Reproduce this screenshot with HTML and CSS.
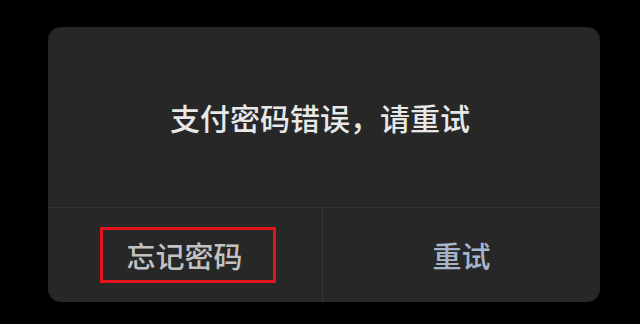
FILE: index.html
```html
<!DOCTYPE html>
<html lang="zh-CN">
<head>
<meta charset="utf-8">
<link rel="stylesheet" href="styles.css">
</head>
<body>
<div class="dialog">
  <div class="message">支付密码错误，请重试</div>
  <div class="actions">
    <div class="action left"><span class="label highlighted">忘记密码</span></div>
    <div class="action right"><span class="label retry">重试</span></div>
  </div>
</div>
</body>
</html>
```
FILE: styles.css
```css
html, body {
  margin: 0;
  padding: 0;
  background: #000;
  width: 640px;
  height: 324px;
  overflow: hidden;
  font-family: "Noto Sans CJK SC", "Noto Sans", sans-serif;
}
.dialog {
  margin: 27px 0 0 48px;
  width: 552px;
  height: 275px;
  border-radius: 13px;
  background: #272727;
  display: flex;
  flex-direction: column;
  overflow: hidden;
}
.message {
  height: 180px;
  display: flex;
  align-items: center;
  justify-content: center;
  padding-right: 8px;
  font-size: 30px;
  font-weight: 500;
  color: #e8e8e8;
  line-height: 1;
}
.actions {
  flex: 1;
  display: grid;
  grid-template-columns: 275px 1fr;
  border-top: 1px solid #363636;
}
.action {
  display: flex;
  align-items: center;
  justify-content: center;
}
.action.left {
  border-right: 1px solid #363636;
}
.label {
  font-size: 29px;
  font-weight: 500;
  line-height: 1;
}
.highlighted {
  color: #c2c2c2;
  box-sizing: border-box;
  width: 176px;
  height: 56px;
  border: 3px solid #e3121b;
  display: flex;
  align-items: center;
  justify-content: center;
  padding-right: 6px;
  margin-left: 5px;
}
.retry {
  color: #a6b5cc;
}
```
